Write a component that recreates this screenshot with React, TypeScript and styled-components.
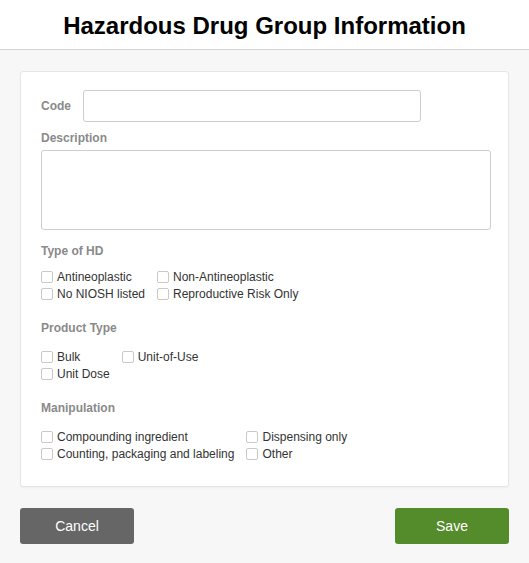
import styled, { createGlobalStyle } from "styled-components";

const GlobalStyle = createGlobalStyle`
    html, body {
        margin: 0;
        padding: 0;
        background: #f7f7f8;
        font-family: "Liberation Sans", Arial, sans-serif;
    }
    * {
        box-sizing: border-box;
    }
`

const Page = styled.div`
    display: flex;
    flex-direction: column;
    width: 529px;
    min-height: 563px;
    background: #f7f7f8;
`
const Header = styled.header`
    display: flex;
    align-items: center;
    justify-content: center;
    flex-shrink: 0;
    height: 50px;
    padding-top: 2px;
    background: #fff;
    border-bottom: 1px solid #d4d4d6;
`
const Title = styled.h1`
    margin: 0;
    color: #000;
    font-size: 24px;
    font-weight: 700;
`
const Body = styled.div`
    display: flex;
    flex-direction: column;
    padding: 21px 20px 20px;
    gap: 21px;
`
const Card = styled.div`
    display: flex;
    flex-direction: column;
    padding: 18px 20px 24px;
    background: #fff;
    border: 1px solid #e6e6e8;
    border-radius: 3px;
    box-shadow: 0 1px 2px rgba(0, 0, 0, 0.04);
`
const FieldRow = styled.div`
    display: flex;
    align-items: center;
    gap: 12px;
`
const Label = styled.div<{ $mt?: number; $mb?: number }>`
    margin: ${props => props.$mt || 0}px 0 ${props => props.$mb || 0}px 0;
    color: #8a8a8a;
    font-size: 12px;
    font-weight: 700;
    line-height: 14px;
`
const Input = styled.input`
    width: 338px;
    height: 32px;
    padding: 0 8px;
    border: 1px solid #cdcdcd;
    border-radius: 3px;
    font-family: inherit;
    font-size: 12px;
    outline: none;
`
const TextArea = styled.textarea`
    width: 450px;
    height: 80px;
    margin: 0;
    padding: 6px 8px;
    border: 1px solid #cdcdcd;
    border-radius: 3px;
    font-family: inherit;
    font-size: 12px;
    resize: none;
    outline: none;
`
const Options = styled.div`
    display: grid;
    grid-template-columns: auto auto;
    justify-content: start;
    column-gap: 12px;
`
const Option = styled.label`
    display: flex;
    align-items: center;
    gap: 4px;
    height: 17px;
    color: #333;
    font-size: 12px;
`
const Box = styled.span`
    display: inline-block;
    width: 12px;
    height: 12px;
    border: 1px solid #c9c9c9;
    border-radius: 2px;
    background: #fff;
`
const Actions = styled.div`
    display: flex;
    justify-content: space-between;
`
const Button = styled.button<{ $primary?: boolean }>`
    width: 114px;
    height: 36px;
    border: none;
    border-radius: 3px;
    background: ${props => props.$primary ? '#548b2b' : '#666666'};
    color: #fff;
    font-family: inherit;
    font-size: 14px;
    cursor: pointer;
`

const sections = [
    { title: "Type of HD", items: ["Antineoplastic", "Non-Antineoplastic", "No NIOSH listed", "Reproductive Risk Only"] },
    { title: "Product Type", items: ["Bulk", "Unit-of-Use", "Unit Dose"] },
    { title: "Manipulation", items: ["Compounding ingredient", "Dispensing only", "Counting, packaging and labeling", "Other"] },
]

export default function App() {
    return (
        <Page>
            <GlobalStyle />
            <Header>
                <Title>Hazardous Drug Group Information</Title>
            </Header>
            <Body>
                <Card>
                    <FieldRow>
                        <Label>Code</Label>
                        <Input />
                    </FieldRow>
                    <Label $mt={9} $mb={5}>Description</Label>
                    <TextArea />
                    {sections.map((s, i) => (
                        <div key={s.title}>
                            <Label $mt={i === 0 ? 14 : 19} $mb={i === 0 ? 10 : 13}>{s.title}</Label>
                            <Options>
                                {s.items.map(item => (
                                    <Option key={item}>
                                        <Box />
                                        {item}
                                    </Option>
                                ))}
                            </Options>
                        </div>
                    ))}
                </Card>
                <Actions>
                    <Button>Cancel</Button>
                    <Button $primary>Save</Button>
                </Actions>
            </Body>
        </Page>
    )
}
